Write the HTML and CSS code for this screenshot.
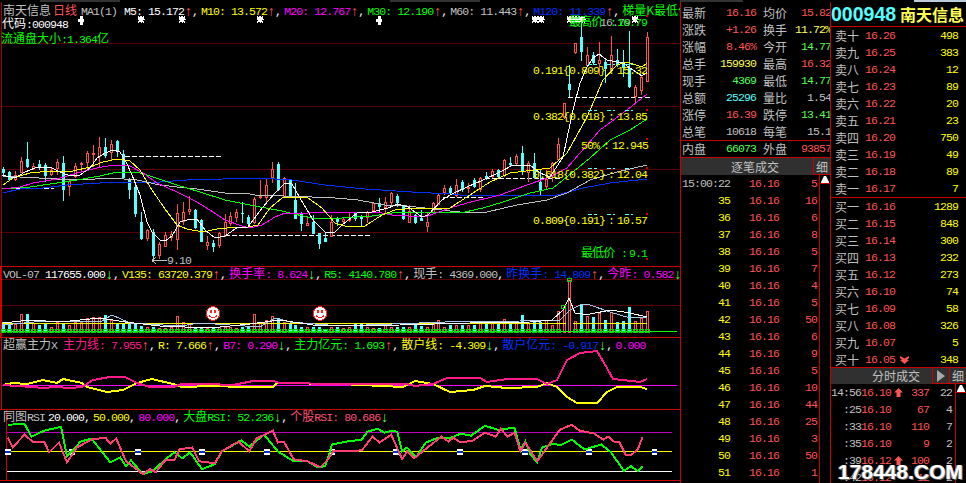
FILE: index.html
```html
<!DOCTYPE html>
<html lang="zh">
<head>
<meta charset="utf-8">
<title>南天信息 日线</title>
<link rel="stylesheet" href="styles.css">
</head>
<body>
<div class="strip"></div>
<main class="screen">
  <section class="charts">
    <div class="panel main-panel">
      <svg class="plot" id="plot-main" viewBox="0 2 680 264"></svg>
      <div class="head head-main">
        <div class="hrow"><span class="cn gy ml3">南天信息</span><span class="cn rd ml2">日线</span><span class="gy ml4">MA1(1)</span><span class="wh ml7">M5: 15.172</span><i class="u">↑</i><i class="c wh">,</i> <span class="ye">M10: 13.572</span><i class="u">↑</i><i class="c wh">,</i> <span class="ma">M20: 12.767</span><i class="u">↑</i><i class="c wh">,</i> <span class="gr">M30: 12.190</span><i class="u">↑</i><i class="c wh">,</i> <span class="gy">M60: 11.443</span><i class="u">↑</i><i class="c wh">,</i> <span class="bl">M120: 11.339</span><i class="u">↑</i><i class="c wh">,</i> <span class="cn gr">梯量K最低价</span></div>
        <div class="hrow"><span class="cn wh ml2">代码</span><span class="wh">:000948</span></div>
        <div class="hrow"><span class="cn gr ml1">流通盘大小</span><span class="gr">:1.364</span><span class="cn gr">亿</span></div>
      </div>
    </div>
    <div class="panel sub-panel vol-panel">
      <svg class="plot" id="plot-vol" viewBox="0 267 680 70"></svg>
      <div class="head"><div class="hrow"><span class="gy ml3">VOL-07</span><span class="wh ml6">117655.000</span><i class="d">↓</i><i class="c wh">,</i> <span class="ye">V135: 63720.379</span><i class="u">↑</i><i class="c wh">,</i> <span class="ma"><span class="cn">换手率</span>: 8.624</span><i class="d">↓</i><i class="c wh">,</i> <span class="gr">R5: 4140.780</span><i class="u">↑</i><i class="c wh">,</i> <span class="gy"><span class="cn">现手</span>: 4369.000</span><i class="c wh">,</i> <span class="bl"><span class="cn">昨换手</span>: 14.809</span><i class="u">↑</i><i class="c wh">,</i> <span class="ma"><span class="cn">今昨</span>: 0.582</span><i class="d">↓</i></div></div>
    </div>
    <div class="panel sub-panel ind-panel">
      <svg class="plot" id="plot-ind" viewBox="0 338 680 71"></svg>
      <div class="head"><div class="hrow"><span class="gy ml3"><span class="cn">超赢主力</span>X</span><span class="pk ml6"><span class="cn">主力线</span>: 7.955</span><i class="u">↑</i><i class="c wh">,</i> <span class="ye">R: 7.666</span><i class="u">↑</i><i class="c wh">,</i> <span class="ma">B7: 0.290</span><i class="d">↓</i><i class="c wh">,</i> <span class="gr"><span class="cn">主力亿元</span>: 1.693</span><i class="u">↑</i><i class="c wh">,</i> <span class="ye"><span class="cn">散户线</span>: -4.309</span><i class="d">↓</i><i class="c wh">,</i> <span class="bl"><span class="cn">散户亿元</span>: -0.917</span><i class="d">↓</i><i class="c wh">,</i> <span class="ma">0.000</span></div></div>
    </div>
    <div class="panel sub-panel rsi-panel">
      <svg class="plot" id="plot-rsi" viewBox="0 410 680 71"></svg>
      <div class="head"><div class="hrow"><span class="gy ml3"><span class="cn">同图</span>RSI</span><span class="wh ml3">20.000</span><i class="c wh">,</i> <span class="ye">50.000</span><i class="c wh">,</i> <span class="ma">80.000</span><i class="c wh">,</i> <span class="gr"><span class="cn">大盘</span>RSI: 52.236</span><i class="d">↓</i><i class="c wh">,</i> <span class="rs"><span class="cn">个股</span>RSI: 80.686</span><i class="d">↓</i></div></div>
    </div>
  </section>

  <section class="quote">
    <div class="stats">
      <div class="stat"><span class="cn gy">最新</span><span class="val rd">16.16</span><span class="cn gy l2">均价</span><span class="val rd">15.82</span></div>
      <div class="stat"><span class="cn gy">涨跌</span><span class="val rd">+1.26</span><span class="cn gy l2">换手</span><span class="val lye">11.72%</span></div>
      <div class="stat"><span class="cn gy">涨幅</span><span class="val rd">8.46%</span><span class="cn gy l2">今开</span><span class="val lgr">14.77</span></div>
      <div class="stat"><span class="cn gy">总手</span><span class="val lye">159930</span><span class="cn gy l2">最高</span><span class="val rd">16.32</span></div>
      <div class="stat"><span class="cn gy">现手</span><span class="val lgr">4369</span><span class="cn gy l2">最低</span><span class="val lgr">14.77</span></div>
      <div class="stat"><span class="cn gy">总额</span><span class="val cy">25296</span><span class="cn gy l2">量比</span><span class="val gy">1.54</span></div>
      <div class="stat"><span class="cn gy">涨停</span><span class="val rd">16.39</span><span class="cn gy l2">跌停</span><span class="val lgr">13.41</span></div>
      <div class="stat"><span class="cn gy">总笔</span><span class="val gy">10618</span><span class="cn gy l2">每笔</span><span class="val gy">15.1</span></div>
    </div>
    <div class="stat inout"><span class="cn gy">内盘</span><span class="val lgr">66073</span><span class="cn gy l2">外盘</span><span class="val rd">93857</span></div>
    <div class="bar bar-ticks"><span class="cn gy bar-title">逐笔成交</span><span class="cn gy bar-cell">细</span></div>
    <div class="tick-wrap">
      <div class="ticks">
        <div class="tick"><span class="gy time-full">15:00:22</span><span class="rd">16.16</span><span class="rd">5</span></div>
        <div class="tick"><span class="ye">35</span><span class="rd">16.16</span><span class="rd">16</span></div>
        <div class="tick"><span class="ye">36</span><span class="rd">16.16</span><span class="rd">6</span></div>
        <div class="tick"><span class="ye">37</span><span class="rd">16.16</span><span class="rd">8</span></div>
        <div class="tick"><span class="ye">38</span><span class="rd">16.16</span><span class="rd">5</span></div>
        <div class="tick"><span class="ye">39</span><span class="rd">16.16</span><span class="rd">7</span></div>
        <div class="tick"><span class="ye">40</span><span class="rd">16.16</span><span class="rd">4</span></div>
        <div class="tick"><span class="ye">41</span><span class="rd">16.16</span><span class="rd">5</span></div>
        <div class="tick"><span class="ye">42</span><span class="rd">16.16</span><span class="rd">50</span></div>
        <div class="tick"><span class="ye">43</span><span class="rd">16.16</span><span class="rd">6</span></div>
        <div class="tick"><span class="ye">44</span><span class="rd">16.16</span><span class="rd">9</span></div>
        <div class="tick"><span class="ye">45</span><span class="rd">16.16</span><span class="rd">5</span></div>
        <div class="tick"><span class="ye">46</span><span class="rd">16.16</span><span class="rd">10</span></div>
        <div class="tick"><span class="ye">47</span><span class="rd">16.16</span><span class="rd">44</span></div>
        <div class="tick"><span class="ye">48</span><span class="rd">16.16</span><span class="rd">25</span></div>
        <div class="tick"><span class="ye">49</span><span class="rd">16.16</span><span class="rd">3</span></div>
        <div class="tick"><span class="ye">50</span><span class="rd">16.16</span><span class="rd">50</span></div>
        <div class="tick"><span class="ye">51</span><span class="rd">16.16</span><span class="rd">1</span></div>
      </div>
      <div class="scroll"><div class="scroll-btn"><svg width="8" height="7" viewBox="0 0 8 7"><polygon points="3,0 5,0 8,6 8,7 0,7 0,6" class="tri"/></svg></div></div>
    </div>
  </section>

  <section class="book">
    <h1 class="title"><span class="code">000948</span><span class="name">南天信息</span></h1>
    <div class="asks">
      <div class="lvl"><span class="cn gy">卖十</span><span class="rd">16.26</span><span></span><span class="qty">498</span></div>
      <div class="lvl"><span class="cn gy">卖九</span><span class="rd">16.25</span><span></span><span class="qty">383</span></div>
      <div class="lvl"><span class="cn gy">卖八</span><span class="rd">16.24</span><span></span><span class="qty">12</span></div>
      <div class="lvl"><span class="cn gy">卖七</span><span class="rd">16.23</span><span></span><span class="qty">89</span></div>
      <div class="lvl"><span class="cn gy">卖六</span><span class="rd">16.22</span><span></span><span class="qty">20</span></div>
      <div class="lvl"><span class="cn gy">卖五</span><span class="rd">16.21</span><span></span><span class="qty">23</span></div>
      <div class="lvl"><span class="cn gy">卖四</span><span class="rd">16.20</span><span></span><span class="qty">750</span></div>
      <div class="lvl"><span class="cn gy">卖三</span><span class="rd">16.19</span><span></span><span class="qty">49</span></div>
      <div class="lvl"><span class="cn gy">卖二</span><span class="rd">16.18</span><span></span><span class="qty">89</span></div>
      <div class="lvl"><span class="cn gy">卖一</span><span class="rd">16.17</span><span></span><span class="qty">7</span></div>
    </div>
    <div class="bids">
      <div class="lvl"><span class="cn gy">买一</span><span class="rd">16.16</span><span></span><span class="qty">1289</span></div>
      <div class="lvl"><span class="cn gy">买二</span><span class="rd">16.15</span><span></span><span class="qty">848</span></div>
      <div class="lvl"><span class="cn gy">买三</span><span class="rd">16.14</span><span></span><span class="qty">300</span></div>
      <div class="lvl"><span class="cn gy">买四</span><span class="rd">16.13</span><span></span><span class="qty">232</span></div>
      <div class="lvl"><span class="cn gy">买五</span><span class="rd">16.12</span><span></span><span class="qty">273</span></div>
      <div class="lvl"><span class="cn gy">买六</span><span class="rd">16.10</span><span></span><span class="qty">74</span></div>
      <div class="lvl"><span class="cn gy">买七</span><span class="rd">16.09</span><span></span><span class="qty">58</span></div>
      <div class="lvl"><span class="cn gy">买八</span><span class="rd">16.08</span><span></span><span class="qty">326</span></div>
      <div class="lvl"><span class="cn gy">买九</span><span class="rd">16.07</span><span></span><span class="qty">5</span></div>
      <div class="lvl lvl-last"><span class="cn gy">买十</span><span class="rd">16.05</span><svg class="arw" width="9" height="8" viewBox="0 0 9 8"><path d="M0 0L4.5 2.5L9 0V2L7 4H9L4.5 8L0 4H2L0 2Z"/></svg><span class="qty">348</span></div>
    </div>
    <div class="bar bar-min"><span class="cn gy bar-title">分时成交</span><span class="bar-cell"><svg width="8" height="12" viewBox="0 0 8 12"><polygon points="0,0 8,6 0,12" class="tri2"/></svg></span><span class="cn gy bar-cell">细</span></div>
    <div class="tick-wrap">
      <div class="mins">
        <div class="min"><span class="gy">14:56</span><span class="rd">16.10</span><svg class="arw" width="9" height="9" viewBox="0 0 9 9"><path d="M4.5 0L9 4.5H6.5V9H2.5V4.5H0Z"/></svg><span class="rd">337</span><span class="gy">22</span></div>
        <div class="min"><span class="gy">:25</span><span class="rd">16.10</span><span></span><span class="rd">67</span><span class="gy">4</span></div>
        <div class="min"><span class="gy">:33</span><span class="rd">16.10</span><span></span><span class="rd">110</span><span class="gy">7</span></div>
        <div class="min"><span class="gy">:35</span><span class="rd">16.10</span><span></span><span class="rd">9</span><span class="gy">2</span></div>
        <div class="min"><span class="gy">:39</span><span class="rd">16.12</span><svg class="arw" width="9" height="9" viewBox="0 0 9 9"><path d="M4.5 0L9 4.5H6.5V9H2.5V4.5H0Z"/></svg><span class="rd">100</span><span class="gy">2</span></div>
        <div class="min"><span class="gy">:42</span><span class="rd">16.12</span><span></span><span class="rd">12</span><span class="gy">2</span></div>
      </div>
      <div class="scroll"><div class="scroll-btn"><svg width="8" height="7" viewBox="0 0 8 7"><polygon points="3,0 5,0 8,6 8,7 0,7 0,6" class="tri"/></svg></div></div>
    </div>
  </section>
  <div class="watermark">178448.COM</div>
</main>
<script src="chart.js"></script>
</body>
</html>
```
FILE: styles.css
```css
* { box-sizing: border-box; margin: 0; padding: 0; }
html, body { width: 966px; height: 483px; overflow: hidden; background: #000; }
body {
  font-family: "Liberation Mono", "Noto Sans CJK SC", monospace;
  font-size: 11.5px;
  letter-spacing: -0.9px;
  color: #c0c0c0;
}
.strip {
  height: 2px;
  background: linear-gradient(to right, #000 40px, #333 40px, #333 120px, #000 120px, #000 390px, #333 390px, #333 480px, #000 480px, #000 680px, #333 680px, #333 743px, #000 743px, #000 914px, #bcd 914px);
}
.screen { position: relative; display: flex; width: 966px; height: 481px; }
i { font-style: normal; }

.cn { font-family: "Noto Sans CJK SC", sans-serif; font-size: 12px; letter-spacing: 0; }
.wh { color: #fff; } .gy { color: #c0c0c0; } .ye { color: #ff0; } .ma { color: #f0f; }
.gr { color: #0f0; } .bl { color: #0030ff; } .pk { color: #ff1a8c; } .rs { color: #ff5078; }
.rd { color: #ff5454; } .cy { color: #54ffff; } .lgr { color: #54ff54; } .lye { color: #ffff54; }
.ml1 { margin-left: 1px; } .ml2 { margin-left: 2px; } .ml3 { margin-left: 3px; }
.ml4 { margin-left: 4px; } .ml6 { margin-left: 6px; } .ml7 { margin-left: 7px; }

.charts { width: 681px; flex: none; display: flex; flex-direction: column; border-right: 1px solid #c80000; }
.panel { display: grid; flex: none; overflow: hidden; }
.panel > * { grid-area: 1 / 1; }
.main-panel { height: 264px; }
.sub-panel { border-top: 1px solid #d00000; }
.vol-panel { height: 71px; }
.ind-panel { height: 72px; }
.rsi-panel { height: 72px; border-bottom: 1px solid #d00000; }
.plot { display: block; width: 680px; height: 100%; shape-rendering: crispEdges; }
.head { align-self: start; }
.head-main { padding-top: 1px; }
.hrow { height: 14px; line-height: 14px; white-space: pre; }
.hrow + .hrow { margin-top: -1px; }
.hrow + .hrow + .hrow { margin-top: 1px; }
.sub-panel .hrow { height: 12px; line-height: 12px; }
.u, .d { display: inline-block; width: 8px; text-align: center; font-size: 14px; letter-spacing: 0; line-height: 12px; vertical-align: -1px; }
.u { color: #ff5454; } .d { color: #54ff54; }
.c { margin-right: -3px; }

.txt { font-family: "Liberation Mono", monospace; font-size: 11.5px; letter-spacing: -0.9px; }
.txt-cn { font-family: "Noto Sans CJK SC", sans-serif; font-size: 12px; }
.f-ye { fill: #ff0; } .f-gr { fill: #0f0; } .f-gy { fill: #c0c0c0; }
.tri { fill: #fff; }
.tri2 { fill: #a8a8a8; }

.quote { width: 150px; flex: none; display: flex; flex-direction: column; border-right: 1px solid #c80000; overflow: hidden; }
.stats { padding-top: 2px; }
.stat { display: grid; grid-template-columns: 24px 50px 31px 44px; height: 17px; line-height: 17px; padding-left: 1px; white-space: nowrap; }
.l2 { padding-left: 7px; }
.val { text-align: right; }
.inout { border-top: 1px solid #c80000; height: 17px; line-height: 16px; }
.bar { display: flex; background: #303030; border-top: 1px solid #c80000; flex: none; }
.bar-ticks { height: 18px; line-height: 17px; }
.bar-title { flex: 1; text-align: center; }
.bar-ticks .bar-title { padding-left: 16px; }
.bar-cell { width: 17px; display: flex; align-items: center; justify-content: center; border-left: 1px solid #c80000; border-bottom: 1px solid #c80000; }
.tick-wrap { display: flex; flex: 1; min-height: 0; }
.ticks { flex: 1; }
.tick { display: grid; grid-template-columns: 49px 49px 38px; height: 17px; line-height: 17px; text-align: right; }
.time-full { text-align: left; padding-left: 1px; white-space: nowrap; }
.scroll { width: 11px; flex: none; border-left: 1px solid #c80000; }
.scroll-btn { height: 9px; display: flex; align-items: flex-end; justify-content: center; border-bottom: 1px solid #c80000; }

.book { flex: 1; min-width: 0; display: flex; flex-direction: column; overflow: hidden; }
.title { height: 25px; flex: none; display: flex; align-items: center; gap: 4px; border-bottom: 1px solid #c80000; letter-spacing: 0; white-space: nowrap; }
.code { font: bold 19.5px/24px "Liberation Sans", sans-serif; color: #54ffff; }
.name { font: bold 16px/24px "Noto Sans CJK SC", sans-serif; color: #ffff54; }
.asks { border-bottom: 1px solid #c80000; flex: none; }
.bids { flex: none; height: 169px; }
.lvl { display: grid; grid-template-columns: 30px 30px 14px 49px; align-items: center; height: 17px; line-height: 17px; padding-left: 4px; }
.qty { color: #ff0; text-align: right; }
.arw { fill: #ff5454; margin-left: 5px; display: block; }
.bar-min { height: 17px; line-height: 16px; }
.bar-min .bar-title { text-align: right; padding-right: 12px; }
.mins { flex: 1; }
.min { display: grid; grid-template-columns: 30px 33px 10px 25px 23px; height: 17px; line-height: 17px; align-items: center; text-align: right; }
.min span:nth-child(2) { text-align: left; padding-left: 0; }
.min .arw { margin-left: 0; }
.watermark {
  position: absolute; right: 3px; bottom: 0;
  font: bold 21px/22px "Liberation Sans", sans-serif; letter-spacing: 0;
  color: #fff; text-shadow: 1px 1px 0 #666, -1px 0 0 #888;
}
```
FILE: chart.js
```js
const NS = "http://www.w3.org/2000/svg";
function el(svg, tag, attrs, text) {
  const n = document.createElementNS(NS, tag);
  for (const k in attrs) n.setAttribute(k, attrs[k]);
  if (text !== undefined) n.textContent = text;
  svg.appendChild(n);
  return n;
}
const hline = (s, y, x1, x2, c, extra) => el(s, "line", Object.assign({ x1, x2, y1: y + .5, y2: y + .5, stroke: c }, extra || {}));
const poly = (s, pts, c, w) => el(s, "polyline", { points: pts, fill: "none", stroke: c, "stroke-width": w || 1 });

/* x, colour, body top, body bottom, high, low, volume-bar top */
const C = [
[3,'c',169,173,167,175,322],[9,'c',172,180,171,181,323],[15,'r',175,180,171,181,324],[21,'r',161,173,157,173,314],
[27,'c',159,167,142,168,314],[33,'r',166,169,163,170,323],[39,'c',164,168,160,170,325],[45,'c',165,176,163,182,323],
[51,'r',170,175,167,176,327],[57,'r',162,169,159,175,322],[63,'c',163,190,156,201,323],[69,'r',181,187,179,196,325],
[75,'r',166,177,163,178,322],[81,'r',163,164,162,172,322],[87,'r',153,163,151,170,318],[93,'r',153,154,145,167,317],
[99,'r',147,157,137,167,317],[105,'c',147,156,138,158,315],[111,'r',144,153,140,160,320],[117,'c',141,152,140,157,324],
[123,'c',154,178,150,179,323],[129,'c',179,190,178,199,324],[135,'c',187,214,183,217,324],[141,'c',222,239,212,240,326],
[147,'r',230,239,229,241,327],[153,'c',232,256,229,258,327],[159,'r',244,256,242,259,328],[165,'r',235,247,232,247,328],
[171,'r',234,238,231,241,327],[177,'r',213,240,204,250,316],[183,'r',212,222,202,225,322],[189,'r',209,212,196,215,323],
[195,'c',210,228,209,229,327],[201,'c',220,242,219,242,327],[207,'r',242,246,236,250,328],[213,'c',243,247,240,252,328],
[219,'r',233,246,232,248,327],[225,'r',222,236,214,237,327],[230,'r',216,224,212,226,327],[236,'r',212,218,209,222,328],
[242,'c',213,214,202,223,327],[248,'c',217,224,215,227,327],[254,'r',199,223,197,224,314],[260,'r',196,198,180,199,323],
[266,'r',185,198,178,202,320],[272,'r',169,178,162,183,316],[278,'c',164,190,162,191,318],[284,'r',178,197,177,198,322],
[290,'c',180,197,179,197,323],[295,'c',200,219,183,219,325],[301,'c',213,224,212,231,327],[307,'r',223,226,216,226,327],
[313,'c',222,234,215,234,327],[319,'c',233,244,233,249,327],[325,'c',238,242,233,242,329],[331,'r',222,237,215,237,327],
[337,'c',219,222,217,226,327],[343,'r',219,222,218,224,328],[349,'r',219,220,212,222,327],[355,'c',213,219,212,221,323],
[361,'c',217,219,215,226,323],[367,'r',212,218,211,223,327],[373,'r',203,211,202,212,328],[379,'c',203,207,198,212,328],
[385,'r',202,208,197,213,325],[391,'r',193,203,192,205,327],[397,'c',196,203,194,207,327],[403,'c',206,219,205,220,327],
[409,'r',211,223,205,223,327],[415,'c',215,223,214,224,323],[421,'c',218,221,210,221,326],[427,'r',222,227,212,232,327],
[433,'r',203,213,202,214,323],[438,'r',195,205,193,205,320],[444,'r',188,193,185,195,327],[450,'c',188,193,186,195,325],
[456,'r',185,196,179,197,325],[462,'c',182,190,180,192,325],[468,'r',187,189,183,193,325],[474,'c',180,187,178,188,325],
[480,'r',178,190,177,192,322],[486,'c',176,178,172,180,323],[492,'r',171,177,169,178,323],[498,'c',170,177,169,178,323],
[504,'r',160,176,159,177,319],[510,'c',163,165,157,167,323],[516,'r',156,164,154,165,322],[522,'c',153,172,146,175,315],
[528,'r',163,173,161,182,322],[534,'c',163,178,153,179,320],[540,'c',182,191,170,195,322],[546,'r',179,187,170,189,320],
[552,'r',163,176,162,182,325],[558,'r',144,160,138,161,311],[564,'r',103,118,103,119,307],[569,'c',84,90,65,97,280],
[575,'r',43,53,43,54,321],[581,'c',37,52,20,61,305],[587,'r',55,66,47,67,316],[593,'c',55,63,52,65,317],
[599,'r',60,64,42,75,313],[605,'c',62,69,59,83,320],[611,'r',55,71,36,72,312],[617,'c',60,65,49,67,322],
[623,'c',63,68,50,77,321],[629,'c',68,87,31,88,307],[635,'r',87,97,85,103,321],[641,'r',77,91,75,95,318],[647,'r',37,82,32,82,311]
];
const RED = "#ff5050", CY = "#54ffff";

const MA = {
 blue: ["#0030ff","3,193 20,189 43,188 67,185 100,183 133,182 160,182 187,180 223,179 258,178 292,180 325,185 365,189 412,192 450,194 460,195 557,195 583,188 610,183 647,179"],
 gray: ["#c0c0c0","3,176 20,177 57,179 80,180 110,178 137,180 160,185 177,187 197,189 225,193 245,193 255,195 312,197 335,198 358,200 385,205 398,205 425,208 450,211 470,213 487,212 517,205 547,200 567,193 590,180 617,172 647,165"],
 green: ["#00ff00","2,189 30,187 57,183 77,180 100,176 117,172 137,172 153,177 177,185 200,192 225,200 255,206 282,211 315,219 342,218 372,216 392,213 425,212 465,212 483,208 503,202 530,193 553,188 563,180 590,158 610,140 630,130 647,119"],
 magenta: ["#ff00ff","3,189 20,187 33,183 57,179 77,173 97,168 113,165 130,166 143,173 157,183 177,192 197,202 213,212 225,220 242,226 250,228 262,225 275,217 285,213 308,213 335,212 365,212 382,213 392,215 408,216 425,217 450,208 467,203 500,195 527,185 550,177 567,168 600,130 627,110 647,94"],
 yellow: ["#ffff00","3,185 13,178 30,173 50,171 73,171 90,167 103,162 117,159 130,161 140,170 150,187 165,209 177,225 187,229 203,232 217,229 238,227 248,227 258,225 270,208 282,198 295,197 308,198 322,208 335,223 348,227 365,226 382,215 395,210 415,208 450,208 473,193 490,182 510,173 550,168 567,153 587,117 603,80 617,65 627,62 642,67 647,63"],
 white: ["#ffffff","2,175 15,178 25,172 35,168 50,167 60,172 68,175 80,175 90,168 97,158 105,153 113,150 120,152 126,162 132,175 140,195 147,222 152,232 160,240 165,241 172,236 180,222 190,219 197,219 205,230 215,238 225,236 238,227 248,227 263,207 275,193 285,183 292,184 300,198 313,220 325,232 335,232 342,225 357,213 372,212 388,208 398,204 408,207 422,217 428,215 442,200 450,195 467,187 483,180 500,172 513,165 530,165 540,173 550,177 563,157 573,110 580,83 587,67 593,58 599,54 607,60 617,62 623,63 630,68 642,76 647,72"]
};

/* main chart */
const m = document.getElementById("plot-main");
[43, 106, 169, 232].forEach(y => hline(m, y, 2, 680, "#5a0000"));
el(m, "line", { x1: 1.5, x2: 1.5, y1: 2, y2: 266, stroke: "#a80000" });
[[156,125,221],[235,225,370],[197,443,484],[178,485,560],[97,568,650],[188,2,54]].forEach(d =>
  hline(m, d[0], d[1], d[2], "#fff", { "stroke-dasharray": "5 2" }));
C.forEach(c => {
  const [x, k, t, b, h, l] = c, col = k === 'r' ? RED : CY;
  el(m, "line", { x1: x + .5, x2: x + .5, y1: h, y2: l, stroke: col });
  if (k === 'c') el(m, "rect", { x: x - 1, y: t, width: 3, height: b - t, fill: col });
  else el(m, "rect", { x: x - .5, y: t + .5, width: 2, height: Math.max(b - t - 1, 1), fill: "#000", stroke: col });
});
["blue","gray","green","magenta","yellow","white"].forEach(n => poly(m, MA[n][1], MA[n][0]));
[64,110,168,214].forEach(y => [[588,597],[607,615],[625,633]].forEach(d => hline(m, y, d[0], d[1], CY, { "stroke-dasharray": "4 2" })));
[16,110,139,168,214,259].forEach(y => el(m, "rect", { x: 646, y: y - 1, width: 2, height: 2, fill: "#d00000" }));
[141,182,260,535,541,570,576,582,635].forEach(x => {
  el(m, "circle", { cx: x, cy: 19, r: 2.6, fill: "#fff" });
  el(m, "path", { d: `M${x - 3.5} 19.5H${x + 3.5}M${x + .5} 15.5V22.5M${x - 3} 16.5L${x + 3} 22.5M${x + 3} 16.5L${x - 3} 22.5`, stroke: "#fff", fill: "none" });
});
[81,379].forEach(x => el(m, "path", { d: `M${x - 3} 18.5H${x + 3}V21.5H${x + 3}H${x + 1.5}V25H${x - 1.5}V21.5H${x - 3}ZM${x - 1.5} 16H${x + 1.5}V19H${x - 1.5}Z`, fill: "#fff" }));

const tx = (cls, x, y, s) => el(m, "text", { class: cls, x, y }, s);
[[74,"0.191{0.809}","15.32"],[120,"0.382{0.618}","13.85"],[178,"0.618{0.382}","12.04"],[224,"0.809{0.191}","10.57"]].forEach(r => {
  tx("txt f-ye", 533, r[0], r[1]); tx("txt f-ye", 608, r[0], ":"); tx("txt f-ye", 617, r[0], r[2]);
});
tx("txt f-ye", 581, 149, "50%"); tx("txt f-ye", 603, 149, ":"); tx("txt f-ye", 612, 149, "12.945");
tx("txt f-gy", 600, 26, "16.79");
tx("txt-cn f-gr", 569, 26, "最高价"); tx("txt f-gr", 610, 26, ":"); tx("txt f-gr", 617, 26, "16.79");
tx("txt-cn f-gr", 581, 257, "最低价"); tx("txt f-gr", 621, 257, ":"); tx("txt f-gr", 629, 257, "9.1");
tx("txt f-gy", 167, 264, "9.10");
el(m, "path", { d: "M152 260.5H167M152 260.5L156 257M152 260.5L156 264", stroke: "#c0c0c0", fill: "none" });

/* volume */
const v = document.getElementById("plot-vol");
[279, 305].forEach(y => hline(v, y, 2, 680, "#5a0000"));
el(v, "rect", { x: 0, y: 267, width: 2, height: 70, fill: "#d00000" });
C.forEach(c => {
  const [x, k] = c, top = c[6], up = k === 'r' || x === 569, col = up ? RED : CY;
  if (!up) el(v, "rect", { x: x - 1, y: top, width: 3, height: 332 - top, fill: col });
  else el(v, "rect", { x: x - .5, y: top + .5, width: 2, height: 332 - top, fill: "#000", stroke: col });
});
hline(v, 323, 2, 566, "#ff0"); hline(v, 323, 573, 647, "#ff0");
poly(v, "3,325 45,321 100,322 112,315 130,323 180,326 200,323 260,327 275,318 290,322 340,326 445,322 520,321 560,320 570,310 582,304 590,305 610,312 630,318 647,317", "#a8c8f0");
poly(v, "3,323 30,320 60,322 100,318 125,322 160,326 210,328 250,324 280,320 320,326 400,325 470,323 530,322 552,320 563,310 569,298 575,313 582,314 590,314 611,310 630,313 647,317", "#fff");
hline(v, 331, 2, 677, "#00ff00");
C.forEach(c => {
  if (c[0] === 564) el(v, "circle", { cx: c[0] - .5, cy: 307, r: 2, fill: "none", stroke: "#00d000" });
  else if (c[0] === 569) el(v, "circle", { cx: c[0] + .5, cy: 280, r: 2, fill: "none", stroke: "#00d000" });
  else el(v, "circle", { cx: c[0] + .5, cy: 331, r: 2, fill: "none", stroke: "#00d000" });
});
[213, 320].forEach(x => {
  el(v, "circle", { cx: x, cy: 313.5, r: 6.8, fill: "#fff", stroke: "#ff2020", "stroke-width": 1 });
  el(v, "rect", { x: x - 3, y: 310, width: 2, height: 3, fill: "#ff2020" });
  el(v, "rect", { x: x + 1, y: 310, width: 2, height: 3, fill: "#ff2020" });
  el(v, "path", { d: `M${x - 4} 315.5Q${x} 320 ${x + 4} 315.5`, stroke: "#ff2020", fill: "none" });
});

/* indicator */
const ind = document.getElementById("plot-ind");
el(ind, "line", { x1: 1.5, x2: 1.5, y1: 338, y2: 409, stroke: "#d00000" });
hline(ind, 385, 2, 677, "#ff00ff");
poly(ind, "3,385 13,383 27,384 43,380 57,383 63,379 82,383 87,387 107,392 123,390 137,383 152,379 173,384 182,387 213,386 243,387 273,387 277,383 340,384 403,387 415,381 433,384 450,392 473,390 485,386 507,388 537,387 547,383 557,387 567,397 577,403 597,403 607,392 617,387 640,387 647,389", "#ffff00", 2);
poly(ind, "3,385 17,386 33,387 43,388 55,387 70,388 82,387 93,380 110,377 125,377 137,383 150,387 173,387 182,384 207,384 233,385 253,381 273,381 280,383 340,384 407,384 415,386 433,384 447,378 480,378 487,382 507,379 537,379 547,384 557,380 567,360 580,353 597,351 607,368 613,379 640,382 647,379", "#ff1a8c", 2);

/* RSI */
const r = document.getElementById("plot-rsi");
el(r, "line", { x1: 1.5, x2: 1.5, y1: 410, y2: 481, stroke: "#d00000" });
hline(r, 432, 2, 677, "#c000c0");
hline(r, 452, 2, 677, "#ffff00");
hline(r, 472, 2, 677, "#fff");
[3,68,135,200,266,332,397,462,528,593,659].forEach(x => {
  el(r, "rect", { x: x - 3, y: 449.5, width: 6, height: 6, fill: "#fff" });
  el(r, "rect", { x: x - 3, y: 451.5, width: 6, height: 2, fill: "#0030c0" });
});
poly(r, "3,425 20,424 27,437 40,431 57,427 63,457 77,442 88,439 107,463 117,458 123,467 128,461 140,475 150,472 163,460 172,453 180,459 188,453 200,470 213,465 220,452 240,441 248,447 263,435 277,452 293,462 307,462 317,468 325,467 332,445 347,442 362,440 368,432 378,429 385,433 393,431 398,432 403,452 408,448 417,458 427,443 440,438 453,438 462,434 473,436 487,426 500,430 517,428 523,450 528,442 533,455 540,463 545,448 557,444 563,446 575,440 588,450 605,445 615,453 628,472 635,467 642,472 647,467", "#00ff00", 2);
poly(r, "3,438 8,448 20,435 28,442 40,442 45,453 55,443 63,463 73,448 88,440 102,438 107,444 113,439 123,462 140,475 147,470 153,473 163,461 172,461 177,450 190,448 197,462 213,464 220,452 237,442 248,452 255,439 272,431 277,443 283,442 293,460 307,462 320,468 328,460 333,452 362,451 373,437 380,443 392,435 403,460 408,452 415,459 430,447 443,437 450,442 455,438 462,443 475,441 487,433 498,437 503,429 510,437 517,433 523,452 528,443 540,462 563,430 575,425 583,431 598,434 607,440 612,437 618,442 623,442 630,456 635,456 642,450 647,437", "#ff4070", 2);
```
